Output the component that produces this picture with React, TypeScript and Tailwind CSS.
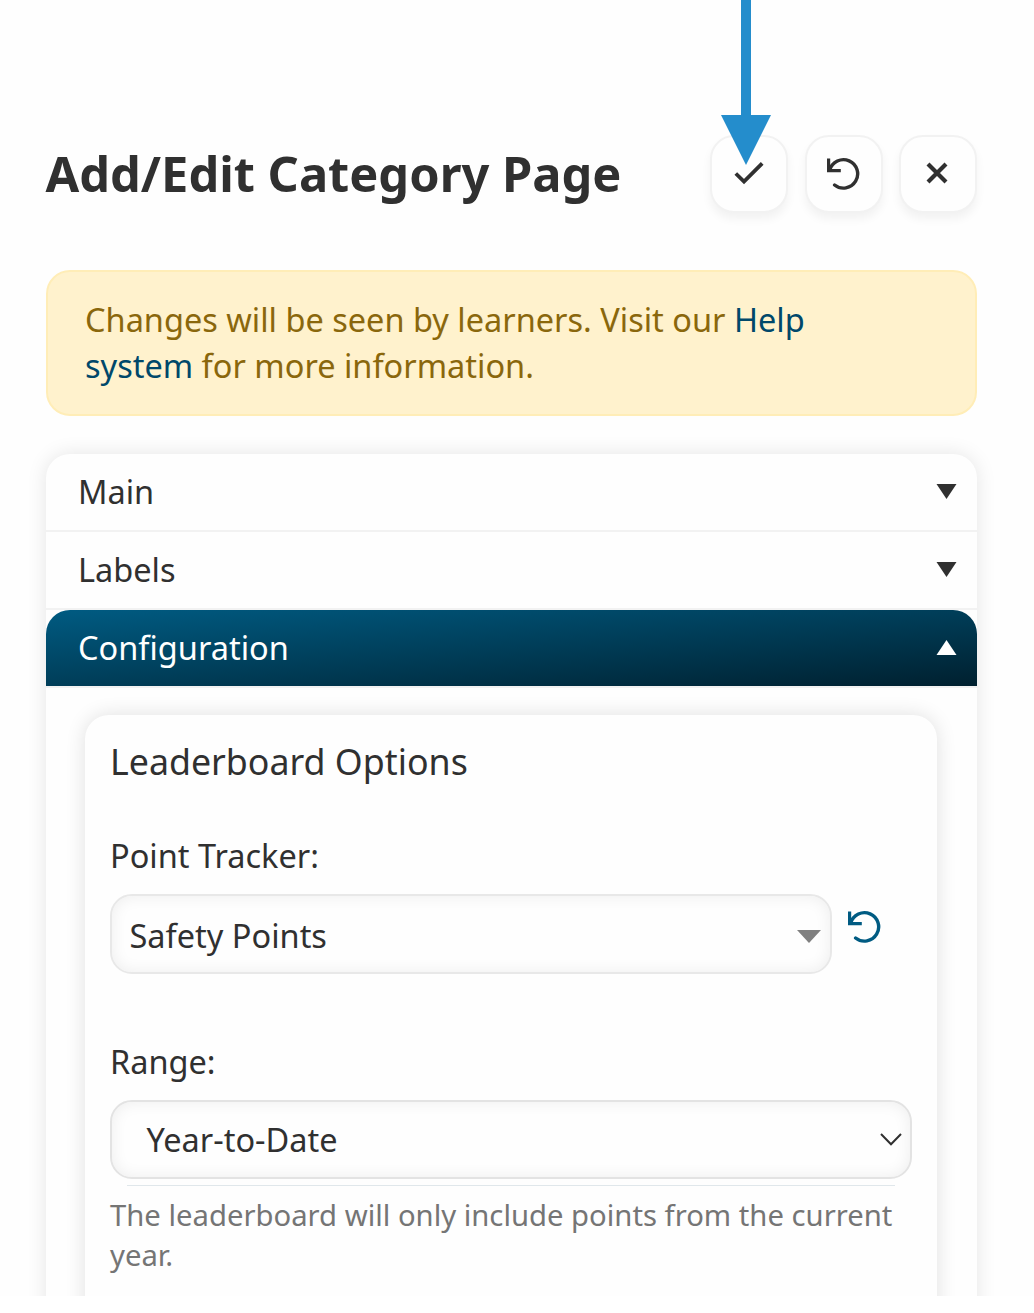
import React from "react";

const iconButton =
  "flex h-[78px] w-[78px] items-center justify-center rounded-[24px] border-2 border-[#f2f2f2] bg-[#fefefe] pb-[2px] pr-[2px] shadow-[0_6px_10px_rgba(0,0,0,0.05)]";

function UndoIcon({ className }: { className: string }) {
  return (
    <svg viewBox="0 0 34 34" className={className} fill="none" stroke="currentColor" strokeWidth="3.4">
      <path d="M2.6 1.4V13.6H14.8" strokeWidth="3.2" />
      <path d="M3.8 13A14.2 14.2 0 1 1 8.6 28" strokeLinecap="round" />
    </svg>
  );
}

function Triangle({ up = false }: { up?: boolean }) {
  return (
    <svg viewBox="0 0 21 15" className="mb-[2px] h-[15px] w-[21px]" fill="currentColor">
      <path d={up ? "M0.5 15H20.5L10.5 0Z" : "M0.5 0H20.5L10.5 15Z"} />
    </svg>
  );
}

function SectionRow({ label }: { label: string }) {
  return (
    <div className="flex h-[78px] items-center justify-between border-b-2 border-[#f2f2f2] pl-8 pr-5 text-[#303030]">
      <span>{label}</span>
      <Triangle />
    </div>
  );
}

export default function App() {
  return (
    <div className="h-[1313px] w-full overflow-hidden bg-white font-['Noto_Sans',sans-serif] text-[32.5px] leading-[46px] text-[#303030]">
      <div className="relative h-[1296px] overflow-hidden bg-[#fefefe] pl-[46px] pr-[57px] pt-[135px]">
        <header className="flex h-[78px] items-center justify-between">
          <h1 className="-ml-[0.5px] whitespace-nowrap pb-[2px] text-[48.75px] font-bold leading-[60px]">
            Add/Edit Category Page
          </h1>
          <div className="flex gap-[16.4px]">
            <button className={iconButton}>
              <svg viewBox="0 0 30 24" className="ml-[2px] h-6 w-[30px]" fill="none" stroke="currentColor" strokeWidth="3.8">
                <path d="M1.8 12.5L10 20.6L28.2 2.4" />
              </svg>
            </button>
            <button className={iconButton}>
              <UndoIcon className="mt-[2px] h-[34px] w-[34px]" />
            </button>
            <button className={iconButton}>
              <svg viewBox="0 0 22 22" className="h-[22px] w-[22px]" fill="none" stroke="currentColor" strokeWidth="4.2">
                <path d="M2 2L20 20M20 2L2 20" />
              </svg>
            </button>
          </div>
        </header>

        <div className="mt-[57px] h-[146px] rounded-[24px] border-2 border-[#ffedb7] bg-[#fff2cd] pl-[37px] pt-[25px] text-[#8a670c]">
          Changes will be seen by learners. Visit our <a className="text-[#00486a]">Help</a>
          <br />
          <a className="text-[#00486a]">system</a> for more information.
        </div>

        <section className="mt-[38px] h-[1000px] rounded-[24px] bg-[#fefefe] shadow-[0_0_20px_rgba(0,0,0,0.1)]">
          <SectionRow label="Main" />
          <SectionRow label="Labels" />
          <div className="border-b-2 border-[#f2f2f2]">
            <div className="flex h-[76px] items-center justify-between rounded-t-[24px] bg-[linear-gradient(to_bottom_right,#005b82,#00202f)] pl-8 pr-5 text-white">
              <span>Configuration</span>
              <Triangle up />
            </div>
          </div>

          <div className="ml-[39px] mr-[40px] mt-[27px] h-[800px] rounded-[24px] bg-[#fefefe] pl-[25px] pr-[25px] pt-[21px] shadow-[0_0_20px_rgba(0,0,0,0.12)]">
            <h2 className="text-[35.75px] leading-[50px]">Leaderboard Options</h2>
            <div className="mt-[47px]">Point Tracker:</div>
            <div className="mt-[15px] flex">
              <div className="flex h-[80px] w-[722px] items-center justify-between rounded-[22px] border-2 border-[#e8e8e8] pl-[17.5px] pr-[9px] pt-1 shadow-[inset_0_0_16px_rgba(0,0,0,0.07)]">
                <span>Safety Points</span>
                <svg viewBox="0 0 24 13" className="h-[13px] w-6" fill="#808080">
                  <path d="M0 0H24L12 13Z" />
                </svg>
              </div>
              <UndoIcon className="ml-[15px] mt-[15.5px] h-[34px] w-[34px] text-[#005b82]" />
            </div>
            <div className="mt-[65px]">Range:</div>
            <div className="mt-[15px] flex h-[79px] w-[802px] items-center justify-between rounded-[22px] border-2 border-[#e3e3e3] pl-[34.5px] pr-2 shadow-[inset_0_0_16px_rgba(0,0,0,0.07)]">
              <span>Year-to-Date</span>
              <svg viewBox="0 0 22 13" className="h-[13px] w-[22px]" fill="none" stroke="currentColor" strokeWidth="2">
                <path d="M1 1L11 11.2L21 1" />
              </svg>
            </div>
            <div className="mx-[17px] mt-[6px] h-px bg-[#e0e7eb]" />
            <p className="mt-[9px] text-[29.25px] leading-10 text-[#757575]">
              The leaderboard will only include points from the current
              <br />
              year.
            </p>
          </div>
        </section>

        <svg viewBox="0 0 50 165" className="absolute left-[721px] top-0 h-[165px] w-[50px]" fill="#248dcc">
          <path d="M20 0H30V115H50L25 165L0 115H20Z" />
        </svg>
      </div>
    </div>
  );
}
